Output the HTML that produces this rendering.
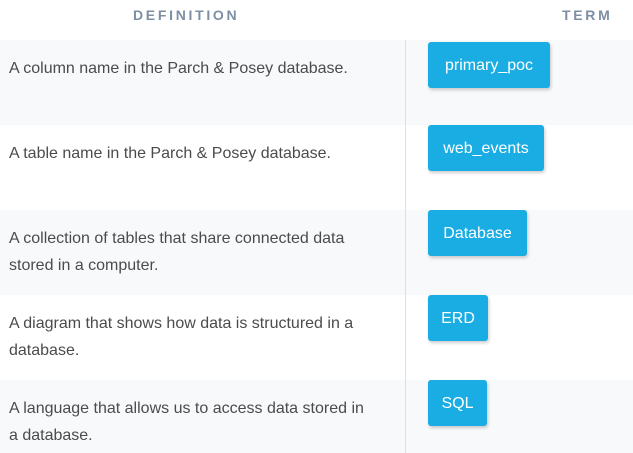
<!DOCTYPE html>
<html><head><style>
body{margin:0;width:633px;height:453px;overflow:hidden;background:#fff;font-family:"Liberation Sans",sans-serif;position:relative}
.h{position:absolute;top:7px;font-size:14px;font-weight:bold;letter-spacing:2.7px;color:#7d8fa5}
.row{position:absolute;left:0;width:633px;height:85px}
.g{background:#f8f9fb}
.d{position:absolute;left:9px;font-size:16px;line-height:27px;color:#4b4b4b;width:390px}
.c{position:absolute;left:428px;height:46px;line-height:48px;background:#1aade3;color:#fff;font-size:16px;border-radius:3px;box-shadow:1px 2px 3px rgba(0,0,0,.2);text-align:center}
.v{position:absolute;left:405px;top:40px;width:1px;height:413px;background:#dcdfe3}
</style></head><body>
<div class="h" style="left:133px">DEFINITION</div>
<div class="h" style="left:562px">TERM</div>
<div class="row g" style="top:40px"></div>
<div class="row" style="top:125px"></div>
<div class="row g" style="top:210px"></div>
<div class="row" style="top:295px"></div>
<div class="row g" style="top:380px;height:73px"></div>
<div class="v"></div>
<div class="d" style="top:55px">A column name in the Parch &amp; Posey database.</div>
<div class="d" style="top:140px">A table name in the Parch &amp; Posey database.</div>
<div class="d" style="top:225px">A collection of tables that share connected data<br>stored in a computer.</div>
<div class="d" style="top:310px">A diagram that shows how data is structured in a<br>database.</div>
<div class="d" style="top:395px">A language that allows us to access data stored in<br>a database.</div>
<div class="c" style="top:42px;width:122px">primary_poc</div>
<div class="c" style="top:125px;width:116px">web_events</div>
<div class="c" style="top:210px;width:99px">Database</div>
<div class="c" style="top:295px;width:60px">ERD</div>
<div class="c" style="top:380px;width:59px">SQL</div>
</body></html>
